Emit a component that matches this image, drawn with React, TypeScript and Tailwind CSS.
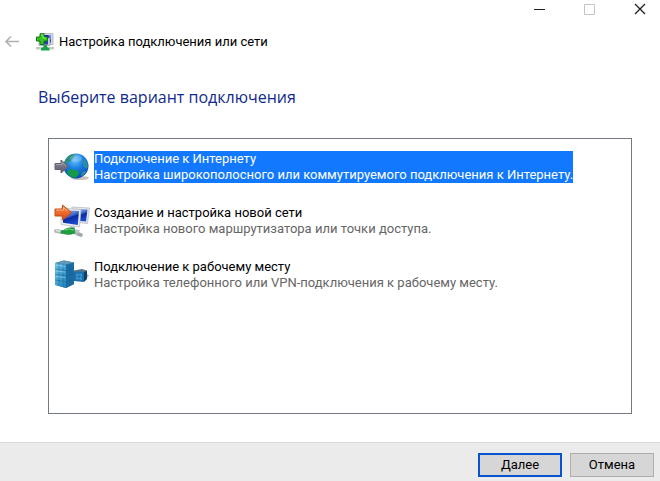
import { useState } from "react";
import type { ReactNode } from "react";
import clsx from "clsx";

type Option = {
  id: string;
  title: string;
  description: string;
  icon: ReactNode;
};

function WizardIcon() {
  return (
    <svg width="18" height="18" viewBox="0 0 18 18" aria-hidden="true">
      <path d="M5 .5h12v11H5z" fill="#d5dade" stroke="#a9b1b8" strokeWidth="0.8" />
      <path d="M7 2h8v7.500H7z" fill="#2028a8" />
      <path d="M12 2h3v5z" fill="#6f86e6" />
      <path d="M3 5h11v7.500H3z" fill="#c8d0d8" stroke="#8b98a4" strokeWidth="0.6" />
      <path d="M5 7h7v4.500H5z" fill="#2b3bb0" />
      <path d="M0 14h18v2.500H0z" fill="#c3cac6" />
      <path d="M7.500 12h3.500v2l2.500 1.500V17.500H5v-2L7.500 14z" fill="#17a34b" />
      <path d="M4 .8h4v3.200h3.500v4H8v3.500H4V8H.5V4H4z" fill="#35c51d" stroke="#14751b" />
      <path d="M5 2h2v3h3" fill="none" stroke="#8af064" />
    </svg>
  );
}

function GlobeIcon() {
  return (
    <svg width="36" height="32" viewBox="0 0 36 32" aria-hidden="true">
      <defs>
        <radialGradient id="globe" cx="0.45" cy="0.25" r="0.75">
          <stop offset="0" stopColor="#6cc4ff" />
          <stop offset="0.45" stopColor="#1c82e4" />
          <stop offset="1" stopColor="#0d47b0" />
        </radialGradient>
        <linearGradient id="grayArrow" x1="0" y1="0" x2="0" y2="1">
          <stop offset="0" stopColor="#8e8d9c" />
          <stop offset="1" stopColor="#5a5869" />
        </linearGradient>
      </defs>
      <ellipse cx="26" cy="27" rx="9" ry="2" fill="#c6c3be" />
      <circle cx="22" cy="15" r="12.5" fill="url(#globe)" />
      <path d="M12 8c2-3 4-4.500 7.500-5l2 1-2 2.500-2 3-4 2-2 3-1.500.5c-.2-3 .5-5 2-7z" fill="#2f8f7a" />
      <path d="M29 7c2.500 1.500 4.500 4.500 5 8l-1.500 3-2.500-2-1.500-4z" fill="#2c8ca0" />
      <path d="M14 19.500l4-1.500 6 2 1 3-3 3.500h-3c-3-1-5-3-6-5z" fill="#159a48" />
      <path d="M28 21l3-1 1 1-3 3.500-2 .5z" fill="#2d8d98" />
      <ellipse cx="22" cy="7.500" rx="6" ry="3.500" fill="#c7ecff" opacity="0.25" />
      <path d="M1 12.500h6V9l7.500 6.500L7 22v-3.500H1z" fill="url(#grayArrow)" stroke="#64626f" />
      <path d="M2 13.500h6v-2l4 3.500" fill="none" stroke="#a9a8b4" strokeWidth="0.8" />
    </svg>
  );
}

function NewNetworkIcon() {
  return (
    <svg width="36" height="34" viewBox="0 0 36 34" aria-hidden="true">
      <defs>
        <linearGradient id="screen" x1="0.3" y1="0" x2="0.7" y2="1">
          <stop offset="0" stopColor="#9db8ee" />
          <stop offset="0.4" stopColor="#3a62c8" />
          <stop offset="0.5" stopColor="#0c2ba0" />
          <stop offset="1" stopColor="#1c50d8" />
        </linearGradient>
        <linearGradient id="orangeArrow" x1="0" y1="0" x2="0" y2="1">
          <stop offset="0" stopColor="#ff9350" />
          <stop offset="1" stopColor="#dc4308" />
        </linearGradient>
      </defs>
      <path d="M18 3l17.500 1-2 15.500-14-1.500z" fill="#e3e6ea" stroke="#b0b6bd" strokeWidth="0.7" />
      <path d="M20 5l13.500.5-1.500 12-10-1z" fill="url(#screen)" />
      <path d="M7 4l20 1.500-1.500 17.500L7 20.500z" fill="#eceef0" stroke="#b0b6bd" strokeWidth="0.7" />
      <path d="M9 6l16 1-1.200 14L9 18.800z" fill="url(#screen)" />
      <path d="M16 22l5 .7v2.500l5 1-1 1.800-10-2z" fill="#bcc3c9" />
      <path d="M2 27l6 1M22 29l5 2" stroke="#b4bbb9" strokeWidth="4" strokeLinecap="round" />
      <path d="M2 26.500l5 1" stroke="#eef1ef" strokeWidth="1.2" />
      <path d="M7 27c4 0 4-3 8-3h5l1 5-3 1c-3 1-8 0-11-1z" fill="#1fa03c" stroke="#15803a" strokeWidth="0.6" />
      <path d="M11 26l4-1 5 1" fill="none" stroke="#6fdd83" />
      <path d="M24 29l4 1-1 2.500-4-1z" fill="#9da5aa" />
      <path d="M1 5h7.500V1l9 7.500-9 7.500v-4H1z" fill="url(#orangeArrow)" stroke="#c1501c" />
      <path d="M2 6h7.500V3.500l4 3.500" fill="none" stroke="#ffb988" strokeWidth="0.8" />
    </svg>
  );
}

function WorkplaceIcon() {
  return (
    <svg width="36" height="32" viewBox="0 0 36 32" aria-hidden="true">
      <defs>
        <linearGradient id="tower" x1="0" y1="0" x2="1" y2="1">
          <stop offset="0" stopColor="#6cc3ea" />
          <stop offset="1" stopColor="#1f7fba" />
        </linearGradient>
      </defs>
      <path d="M32 14l3 2.500-5 5.500z" fill="#8d9499" opacity="0.7" />
      <path d="M20 11.500l8-1.500 5 1.500-2 1.500H20z" fill="#51758a" />
      <path d="M20 12.500l10 .5v10l-10-1z" fill="#1b6fae" />
      <path d="M30 13l3-1.500V20l-3 3z" fill="#12405f" />
      <path d="M22 14.500l6 .3v6.200l-6-.5z" fill="#3a96d0" />
      <path d="M22 17.500l6 .3M25 14.500v6.500" stroke="#1c689c" strokeWidth="0.7" />
      <path d="M1 4l9-2.500 10 2v21.500l-8 4L1 26z" fill="#246f9e" />
      <path d="M1 4l11 1.500V29L1 26z" fill="url(#tower)" />
      <path d="M12 5.500l8-2V25l-8 4z" fill="#1c6ca4" />
      <path d="M1 4l9-2.500 10 2-8 2z" fill="#5e9ab8" />
      <path d="M1 10l11 1.500 8-2M1 15.500l11 1 8-1.500M1 21l11 1.500 8-2M5 4.500V27M9 5v23M16 4.500V27" fill="none" stroke="#17608f" strokeWidth="0.5" />
      <path d="M2 6l9 1.500M2 12l9 1M2 17.500l9 1" stroke="#9fdaf4" strokeWidth="0.6" />
    </svg>
  );
}

const OPTIONS: Option[] = [
  {
    id: "internet",
    title: "Подключение к Интернету",
    description: "Настройка широкополосного или коммутируемого подключения к Интернету.",
    icon: <GlobeIcon />,
  },
  {
    id: "network",
    title: "Создание и настройка новой сети",
    description: "Настройка нового маршрутизатора или точки доступа.",
    icon: <NewNetworkIcon />,
  },
  {
    id: "workplace",
    title: "Подключение к рабочему месту",
    description: "Настройка телефонного или VPN-подключения к рабочему месту.",
    icon: <WorkplaceIcon />,
  },
];

export default function App() {
  const [selected, setSelected] = useState("internet");

  return (
    <div className="flex min-h-screen flex-col bg-white font-[Roboto,'Noto_Sans',sans-serif] text-[13px] leading-4 text-black">
      <div className="flex h-5 justify-end gap-[34px] pr-3">
        <button type="button" aria-label="Свернуть" className="w-4">
          <svg width="16" height="18" viewBox="0 0 16 18" stroke="#222">
            <path d="M2 8.500h11" />
          </svg>
        </button>
        <button type="button" aria-label="Развернуть" disabled className="w-4">
          <svg width="16" height="18" viewBox="0 0 16 18" fill="none" stroke="#c4c4c4">
            <path d="M2.500 3.500h10v10h-10z" />
          </svg>
        </button>
        <button type="button" aria-label="Закрыть" className="w-4">
          <svg width="16" height="18" viewBox="0 0 16 18" stroke="#222" strokeWidth="1.4">
            <path d="M3 3l10 10M13 3L3 13" />
          </svg>
        </button>
      </div>

      <header className="flex h-11 items-center pl-1">
        <button type="button" aria-label="Назад" disabled className="mr-4">
          <svg width="16" height="14" viewBox="0 0 16 14" fill="none" stroke="#b0b0b0" strokeWidth="1.6">
            <path d="M15 6.500H2M7 1.500l-5 5 5 5" />
          </svg>
        </button>
        <WizardIcon />
        <h1 className="ml-[5px]">Настройка подключения или сети</h1>
      </header>

      <main className="flex flex-1 flex-col pr-7 pb-7 pl-12">
        <h2 id="question" className="-ml-2.5 pt-5 pb-7 font-['Open_Sans','Noto_Sans',sans-serif] text-base leading-[26px] text-[#102a8c]">
          Выберите вариант подключения
        </h2>
        <div
          role="listbox"
          aria-labelledby="question"
          className="flex flex-1 flex-col gap-5 border border-[#737885] py-[11px] pl-[5px]"
        >
          {OPTIONS.map((option) => (
            <button
              key={option.id}
              type="button"
              role="option"
              aria-selected={selected === option.id}
              onClick={() => setSelected(option.id)}
              className="flex h-8.5 items-center gap-1 text-left"
            >
              <span className="shrink-0">{option.icon}</span>
              <span className={clsx("flex flex-col", selected === option.id ? "bg-[#1279ff] text-white" : "text-black")}>
                <span>{option.title}</span>
                <span className={clsx(selected !== option.id && "text-[#666]")}>{option.description}</span>
              </span>
            </button>
          ))}
        </div>
      </main>

      <footer className="flex justify-end gap-2 border-t border-[#d9d9d9] bg-[#ebebeb] px-1.5 pt-2.5 pb-1">
        <button type="button" className="h-6 w-21 border-2 border-[#0853d0] bg-[#d6d6d6]">
          Далее
        </button>
        <button type="button" className="h-6 w-21 border border-[#adadad] bg-[#d6d6d6]">
          Отмена
        </button>
      </footer>
    </div>
  );
}
